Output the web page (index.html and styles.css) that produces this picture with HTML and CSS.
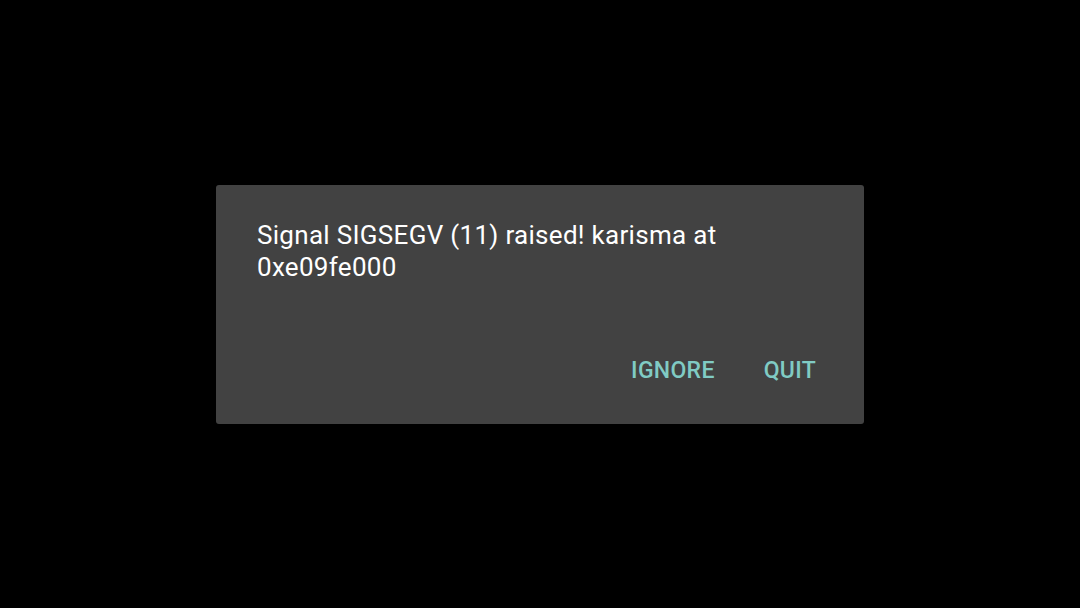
FILE: index.html
```html
<!DOCTYPE html>
<html lang="en">
<head>
  <meta charset="UTF-8" />
  <title>Signal</title>
  <link rel="stylesheet" href="styles.css">
</head>
<body>
  <div class="screen">
    <div class="dialog">
      <p class="message">Signal SIGSEGV (11) raised! karisma at 0xe09fe000</p>
      <div class="actions">
        <button type="button" class="action">IGNORE</button>
        <button type="button" class="action">QUIT</button>
      </div>
    </div>
  </div>
</body>
</html>
```
FILE: styles.css
```css
body {
  margin: 0;
  background: #000;
  font-family: Roboto, "Noto Sans", sans-serif;
}
.screen {
  width: 1080px;
  height: 608px;
  display: flex;
  align-items: center;
  justify-content: center;
}
.dialog {
  width: 648px;
  height: 239px;
  box-sizing: border-box;
  background: #424242;
  border-radius: 3px;
  padding: 34px 48px 0 41px;
  display: flex;
  flex-direction: column;
}
.message {
  margin: 0;
  color: #fff;
  font-size: 26px;
  line-height: 32px;
  letter-spacing: 0.3px;
  width: 490px;
}
.actions {
  margin-top: auto;
  margin-bottom: 39px;
  display: flex;
  justify-content: flex-end;
  gap: 49px;
}
.action {
  background: none;
  border: none;
  padding: 0;
  color: #80cbc4;
  font-family: Roboto, "Noto Sans", sans-serif;
  font-weight: 500;
  font-size: 23px;
  line-height: 28px;
  letter-spacing: 0.3px;
}
```
